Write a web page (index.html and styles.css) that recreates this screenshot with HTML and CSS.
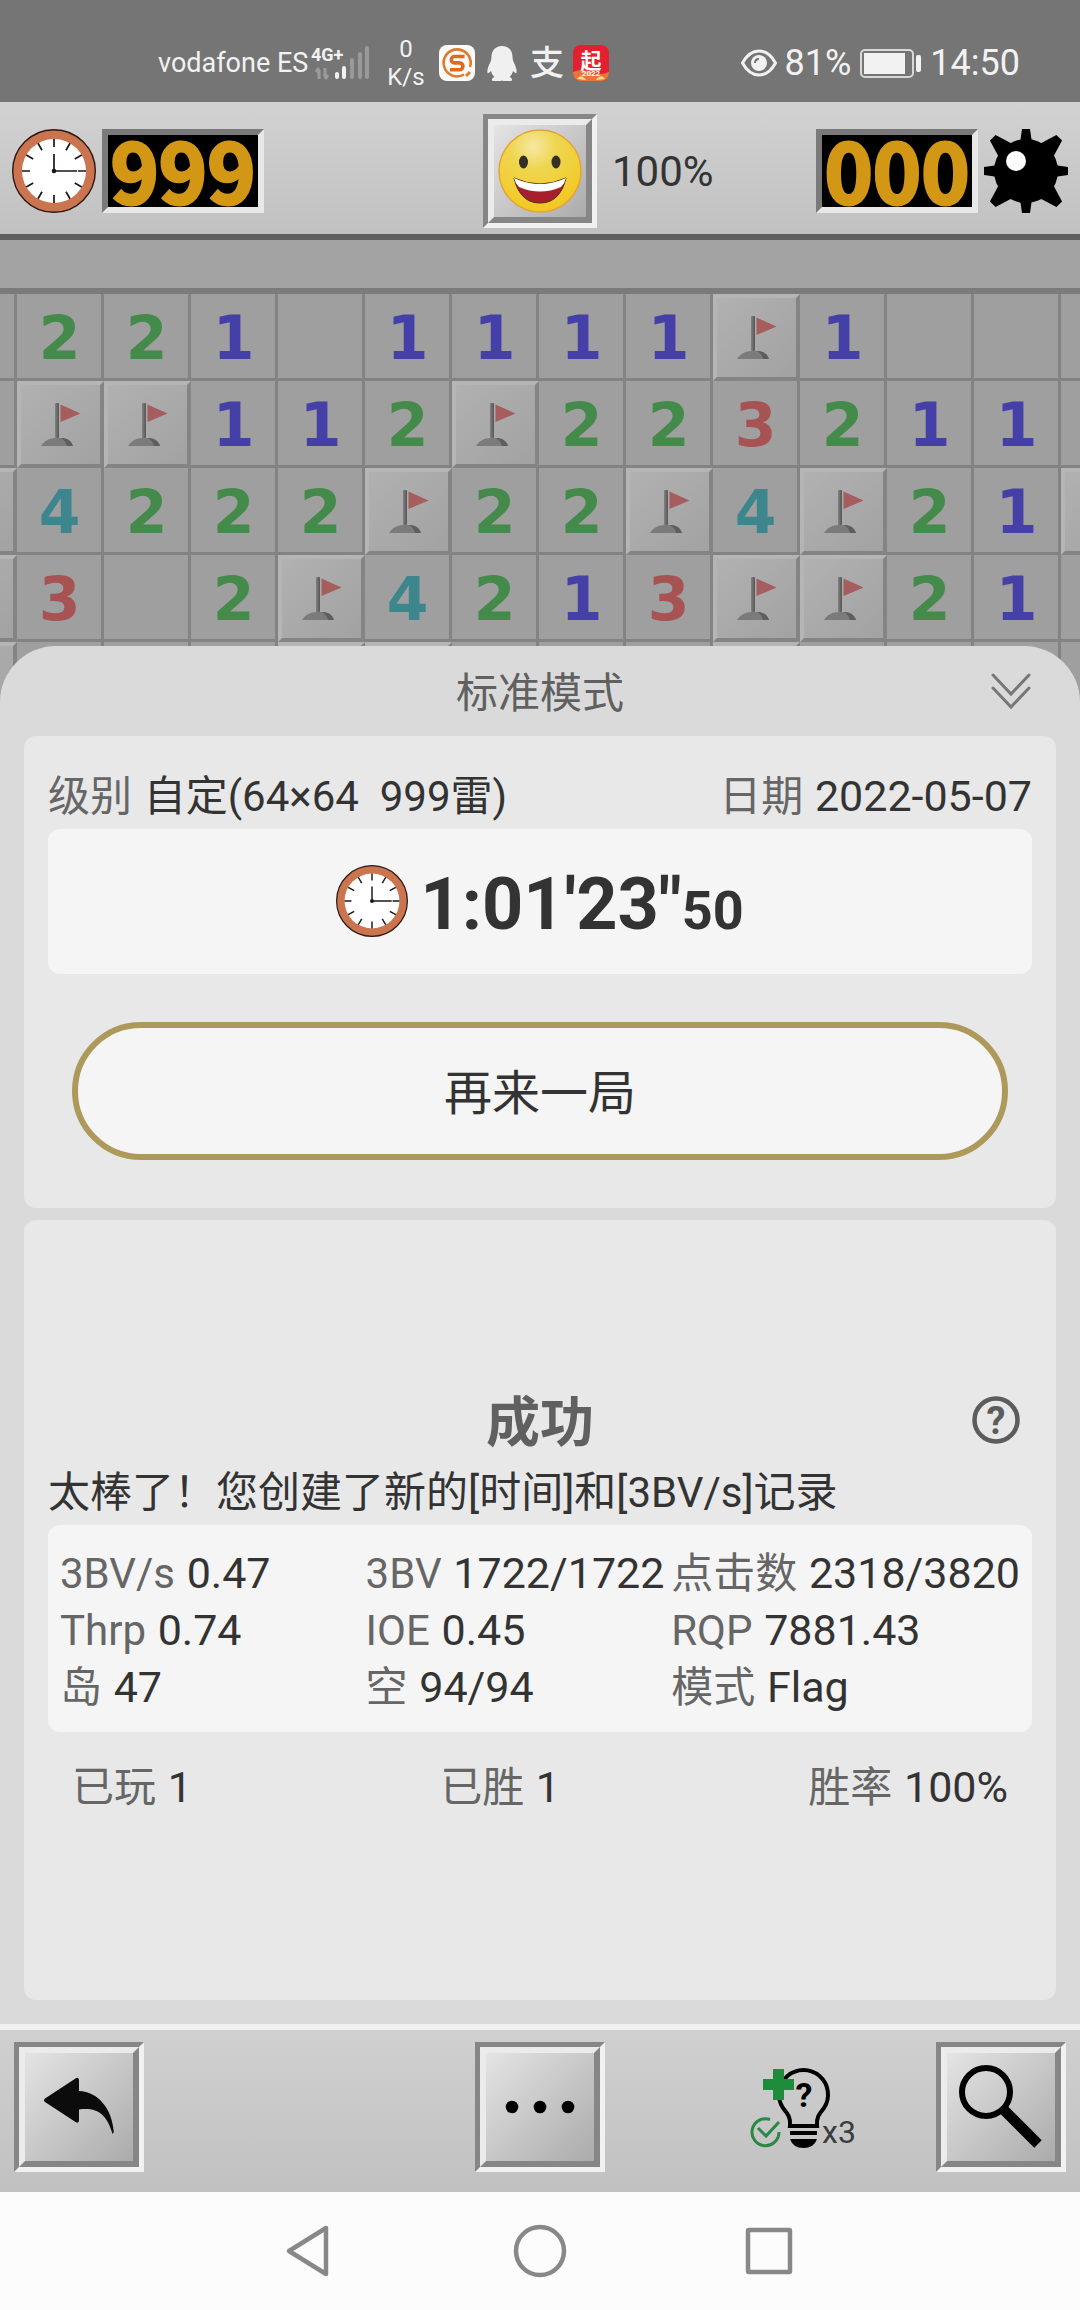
FILE: index.html
```html
<!DOCTYPE html>
<html lang="zh-CN">
<head>
    <meta charset="UTF-8">
    <meta name="viewport" content="width=device-width, initial-scale=1.0">
    <title>扫雷 - 标准模式</title>
    <link rel="stylesheet" href="styles.css">
</head>
<body>
    <!-- shared icons -->
    <svg class="sprite" aria-hidden="true">
        <defs>
            <linearGradient id="pole" x1="0" x2="1" y1="0" y2="0">
                <stop offset="0" stop-color="#818181"/>
                <stop offset="1" stop-color="#565656"/>
            </linearGradient>
        </defs>
        <symbol id="clock" viewBox="0 0 84 84">
            <circle cx="42" cy="42" r="41.3" fill="#cb7450" stroke="#2b1710" stroke-width="1.4"/>
            <circle cx="42" cy="42" r="32" fill="#fff"/>
            <g stroke="#1d1614" stroke-width="1.7">
                <path d="M42 10v8M42 66v8M10 42h8M66 42h8"/>
                <path d="M42 10v8M42 66v8M10 42h8M66 42h8" transform="rotate(30 42 42)"/>
                <path d="M42 10v8M42 66v8M10 42h8M66 42h8" transform="rotate(60 42 42)"/>
                <path d="M42 25v17h23" fill="none"/>
            </g>
            <circle cx="42" cy="42" r="2.3" fill="#1d1614"/>
        </symbol>
        <symbol id="flag" viewBox="0 0 40 43">
            <path d="M19.5 1.5v17.5l20-8.5z" fill="#a65d5d"/>
            <rect x="14" y="0" width="4" height="35" rx="1" fill="url(#pole)"/>
            <path d="M0 43c3-5 8-8 15-8h7c6 1 9 4 10 8z" fill="#7b7b7b"/>
            <path d="M20 35c5 0 10 2 12 8h-6c-1-4-3-6-6-8z" fill="#5e5e5e"/>
        </symbol>
    </svg>

    <div class="screen">
        <header class="status-bar">
            <div class="status-left">
                <span>vodafone ES</span>
                <svg class="signal" viewBox="0 0 60 36" width="60" height="36" role="img" aria-label="4G+">
                    <text x="0" y="16" class="signal-text">4G+</text>
                    <path d="M8 34V25m0-2-3 4M14 23v9m0 2 3-4" stroke="#9b9b9b" stroke-width="3" fill="none"/>
                    <g stroke-width="4" stroke-linecap="round">
                        <path d="M26 29v3M33 23v9" stroke="#f2f2f2"/>
                        <path d="M41 15v17M49 9v23M56 3v29" stroke="#999"/>
                    </g>
                </svg>
                <span class="speed">0<br>K/s</span>
                <svg class="app-icon" viewBox="0 0 36 36" width="36" height="36">
                    <rect width="36" height="36" rx="8" fill="#fdfbf9"/>
                    <path d="M25 29.500A13.500 13.500 0 1 1 31 22" fill="none" stroke="#e17a2a" stroke-width="2.6"/>
                    <path d="M27 31l4-4" stroke="#e17a2a" stroke-width="3"/>
                    <path d="M25.500 11.500H15.500a3.200 3.200 0 0 0 0 6.400h5a3.400 3.400 0 0 1 0 6.800H11" fill="none" stroke="#e06a1c" stroke-width="3.600"/>
                </svg>
                <svg class="app-icon" viewBox="0 0 30 36" width="30" height="36">
                    <path d="M15 1C8 1 4.500 6 4.500 12c0 2-.5 4-1.500 6-2 4-3 7-2.500 10 .5 1 2-.5 3.500-2 .5 2.500 2 4.500 3.500 6-3 1-3.500 4-1 4h7l1.500-.5 1.500.5h7c2.500 0 2-3-1-4 1.500-1.500 3-3.500 3.500-6 1.500 1.500 3 3 3.500 2 .5-3-.5-6-2.500-10-1-2-1.500-4-1.500-6C25.500 6 22 1 15 1z" fill="#f0f0f0"/>
                </svg>
                <svg class="app-icon" viewBox="0 0 32 36" width="32" height="36">
                    <text x="18" y="30" class="pay-text">支</text>
                </svg>
                <svg class="app-icon" viewBox="0 0 36 36" width="36" height="36">
                    <rect width="36" height="36" rx="8" fill="#e3202f"/>
                    <path d="M0 27q9-4 18 0t18 0v1a8 8 0 0 1-8 8H8a8 8 0 0 1-8-8z" fill="#e9743f"/>
                    <path d="M4 34q4-6 9 1zM23 35q5-7 9-1z" fill="#f9dc8f"/>
                    <text x="18" y="23" class="qi-text">起</text>
                    <text x="18" y="31" class="qi-year">2022</text>
                </svg>
            </div>
            <div class="status-right">
                <svg viewBox="0 0 36 28" width="36" height="28">
                    <path d="M1.500 14Q8 2 18 2t16.500 12Q28 26 18 26T1.500 14z" fill="none" stroke="#f2f2f2" stroke-width="3"/>
                    <circle cx="18" cy="14" r="8" fill="#f2f2f2"/>
                    <path d="M14 14q0-4 4-4" fill="none" stroke="#757575" stroke-width="2"/>
                </svg>
                <span>81%</span>
                <svg class="battery" viewBox="0 0 61 29" width="61" height="29">
                    <rect x="1" y="1" width="52" height="27" rx="4" fill="none" stroke="#d8d8d8" stroke-width="2"/>
                    <rect x="4" y="4" width="41" height="21" fill="#f2f2f2"/>
                    <rect x="56" y="6" width="5" height="17" rx="2" fill="#f2f2f2"/>
                </svg>
                <span>14:50</span>
            </div>
        </header>

        <div class="game-bar">
            <div class="counter-group">
                <svg class="icon"><use href="#clock"/></svg>
                <output class="counter">999</output>
            </div>
            <button class="tool-button" type="button" aria-label="重新开始">
                <span class="tool-face face-tight">
                    <svg class="icon" viewBox="0 0 84 84">
                        <defs>
                            <radialGradient id="skin" cx=".42" cy=".2" r=".8">
                                <stop offset="0" stop-color="#f6e7a4"/>
                                <stop offset=".35" stop-color="#efd650"/>
                                <stop offset="1" stop-color="#f2c81f"/>
                            </radialGradient>
                        </defs>
                        <circle cx="42" cy="42" r="41" fill="url(#skin)" stroke="#e5a23a" stroke-width="1.500"/>
                        <ellipse cx="25.500" cy="33" rx="4.500" ry="6.500" fill="#333027"/>
                        <ellipse cx="58" cy="33" rx="4.500" ry="6.500" fill="#333027"/>
                        <path d="M16 49q26 12 52 0-6 25-26 25T16 49z" fill="#a81f2c" stroke="#4b2317" stroke-width="1"/>
                        <path d="M16 49q26 12 52 0-1 5-5 9-21 9-42 0-4-4-5-9z" fill="#fff"/>
                    </svg>
                </span>
            </button>
            <div class="game-bar-right">
                <span class="progress">100%</span>
                <div class="counter-group">
                    <output class="counter">000</output>
                    <svg class="icon" viewBox="0 0 84 84">
                        <circle cx="42" cy="42" r="32"/>
                        <path d="M38 0h8l2 14H36zM38 84h8l2-14H36zM0 38v8l14 2V36zM84 38v8l-14 2V36z"/>
                        <path d="M38-5h8l6 20H32zM38 89h8l6-20H32zM-5 38v8l20 6V32zM89 38v8l-20 6V32z" transform="rotate(45 42 42)"/>
                        <circle cx="32" cy="32" r="10" fill="#fff"/>
                    </svg>
                </div>
            </div>
        </div>

        <div class="board">
            <div class="cells">
                <i class="cell"></i><i class="cell n2">2</i><i class="cell n2">2</i><i class="cell n1">1</i><i class="cell"></i><i class="cell n1">1</i><i class="cell n1">1</i>
                <i class="cell n1">1</i><i class="cell n1">1</i><i class="cell covered"><svg class="flag"><use href="#flag"/></svg></i><i class="cell n1">1</i><i class="cell"></i><i class="cell"></i><i class="cell"></i>

                <i class="cell"></i><i class="cell covered"><svg class="flag"><use href="#flag"/></svg></i><i class="cell covered"><svg class="flag"><use href="#flag"/></svg></i><i class="cell n1">1</i><i class="cell n1">1</i><i class="cell n2">2</i><i class="cell covered"><svg class="flag"><use href="#flag"/></svg></i>
                <i class="cell n2">2</i><i class="cell n2">2</i><i class="cell n3">3</i><i class="cell n2">2</i><i class="cell n1">1</i><i class="cell n1">1</i><i class="cell"></i>

                <i class="cell covered"></i><i class="cell n4">4</i><i class="cell n2">2</i><i class="cell n2">2</i><i class="cell n2">2</i><i class="cell covered"><svg class="flag"><use href="#flag"/></svg></i><i class="cell n2">2</i>
                <i class="cell n2">2</i><i class="cell covered"><svg class="flag"><use href="#flag"/></svg></i><i class="cell n4">4</i><i class="cell covered"><svg class="flag"><use href="#flag"/></svg></i><i class="cell n2">2</i><i class="cell n1">1</i><i class="cell covered"></i>

                <i class="cell covered"></i><i class="cell n3">3</i><i class="cell"></i><i class="cell n2">2</i><i class="cell covered"><svg class="flag"><use href="#flag"/></svg></i><i class="cell n4">4</i><i class="cell n2">2</i>
                <i class="cell n1">1</i><i class="cell n3">3</i><i class="cell covered"><svg class="flag"><use href="#flag"/></svg></i><i class="cell covered"><svg class="flag"><use href="#flag"/></svg></i><i class="cell n2">2</i><i class="cell n1">1</i><i class="cell"></i>

                <i class="cell covered"></i><i class="cell"></i><i class="cell"></i><i class="cell"></i><i class="cell covered"></i><i class="cell covered"></i><i class="cell"></i>
                <i class="cell"></i><i class="cell"></i><i class="cell covered"></i><i class="cell"></i><i class="cell"></i><i class="cell"></i><i class="cell"></i>
            </div>
        </div>

        <main class="sheet">
            <div class="sheet-header">
                <h1>标准模式</h1>
                <button class="plain-button" type="button" aria-label="收起">
                    <svg viewBox="0 0 40 36" width="40" height="36" fill="none" stroke="#777" stroke-width="3" stroke-linecap="round">
                        <path d="M2 2l18 19L38 2M2 15l18 19 18-19"/>
                    </svg>
                </button>
            </div>

            <section class="card">
                <div class="row">
                    <span><span class="label">级别</span> <span class="level">自定(64×64  999雷)</span></span>
                    <span><span class="label">日期</span> 2022-05-07</span>
                </div>
                <div class="time-box">
                    <svg class="time-icon"><use href="#clock"/></svg>
                    <span class="time">1:01'23"<small>50</small></span>
                </div>
                <button class="again" type="button">再来一局</button>
            </section>

            <section class="card result">
                <div class="result-header">
                    <h2>成功</h2>
                    <button class="plain-button" type="button" aria-label="帮助">
                        <svg viewBox="0 0 48 48" width="48" height="48">
                            <circle cx="24" cy="24" r="21.500" fill="none" stroke="#5c5c5c" stroke-width="4.500"/>
                            <text x="24" y="38" class="help-mark">?</text>
                        </svg>
                    </button>
                </div>
                <p class="message">太棒了！您创建了新的[时间]和[3BV/s]记录</p>
                <div class="stats">
                    <span><span class="label">3BV/s</span> 0.47</span>
                    <span><span class="label">3BV</span> 1722/1722</span>
                    <span><span class="label">点击数</span> 2318/3820</span>
                    <span><span class="label">Thrp</span> 0.74</span>
                    <span><span class="label">IOE</span> 0.45</span>
                    <span><span class="label">RQP</span> 7881.43</span>
                    <span><span class="label">岛</span> 47</span>
                    <span><span class="label">空</span> 94/94</span>
                    <span><span class="label">模式</span> Flag</span>
                </div>
                <div class="totals">
                    <span><span class="label">已玩</span> 1</span>
                    <span><span class="label">已胜</span> 1</span>
                    <span><span class="label">胜率</span> 100%</span>
                </div>
            </section>
        </main>

        <div class="bottom-bar">
            <div>
                <button class="tool-button" type="button" aria-label="返回">
                    <span class="tool-face">
                        <svg class="icon" viewBox="0 0 84 84" fill="#0c0c0c">
                            <path d="M8 33.500 38.500 13.500q3.500-2 3.500 2V26c19 1 33 17 34.800 41l-1.300 2C70 49 60 42 42 44.500V55q0 4-3.500 2L8 37q-2-1.700 0-3.500z"/>
                        </svg>
                    </span>
                </button>
            </div>
            <button class="tool-button" type="button" aria-label="更多">
                <span class="tool-face">
                    <svg class="icon" viewBox="0 0 84 84">
                        <circle cx="14" cy="42" r="6.300"/>
                        <circle cx="42" cy="42" r="6.300"/>
                        <circle cx="70" cy="42" r="6.300"/>
                    </svg>
                </span>
            </button>
            <div class="bottom-right">
                <button class="plain-button" type="button" aria-label="提示">
                    <svg class="hint" viewBox="0 0 106 84" width="106" height="84">
                        <path d="M40 61c1-9-3-13-7-18A24.500 24.500 0 1 1 74 43c-4 5-8 9-7 18z" fill="none" stroke="#000" stroke-width="4"/>
                        <path d="M40 66h27v4H40zM40 74h27q-3 9-13.500 9T40 74z"/>
                        <text x="54" y="42" class="hint-mark">?</text>
                        <path d="M23 4h11v10h10v11H34v10H23V25H13V14h10z" fill="#1f8c3b"/>
                        <path d="M20 54.500A13.500 13.500 0 1 0 29 67M8 63l8 8 13-14" fill="none" stroke="#2a8744" stroke-width="3"/>
                        <text x="72" y="78" class="hint-count">x3</text>
                    </svg>
                </button>
                <button class="tool-button" type="button" aria-label="缩放">
                    <span class="tool-face">
                        <svg class="icon" viewBox="0 0 84 84" fill="none" stroke="#000">
                            <circle cx="27" cy="27" r="24" stroke-width="6"/>
                            <path d="M45 45l34 34" stroke-width="10.500"/>
                        </svg>
                    </span>
                </button>
            </div>
        </div>

        <nav class="nav-bar">
            <button class="plain-button" type="button" aria-label="后退">
                <svg viewBox="0 0 60 60" width="60" height="60"><path d="M9 30 46 7v46z"/></svg>
            </button>
            <button class="plain-button" type="button" aria-label="主屏幕">
                <svg viewBox="0 0 60 60" width="60" height="60"><circle cx="30" cy="30" r="24"/></svg>
            </button>
            <button class="plain-button" type="button" aria-label="最近任务">
                <svg viewBox="0 0 60 60" width="60" height="60"><rect x="8" y="9" width="42" height="42" rx="1"/></svg>
            </button>
        </nav>
    </div>
</body>
</html>
```
FILE: styles.css
```css
* {
    box-sizing: border-box;
}
body {
    margin: 0;
    font-family: Roboto, "Noto Sans CJK SC", sans-serif;
    font-size: 42px;
    color: #333;
    background: #fcfcfc;
}
h1, h2, p {
    margin: 0;
}
button {
    margin: 0;
    padding: 0;
    font: inherit;
    color: inherit;
    cursor: pointer;
}
svg {
    display: block;
    flex: none;
}
.sprite {
    position: absolute;
    width: 0;
    height: 0;
}
.screen {
    display: flex;
    flex-direction: column;
    min-height: 100vh;
}
.icon {
    width: 84px;
    height: 84px;
    overflow: visible;
}
.plain-button {
    border: 0;
    background: none;
}

/* status bar */
.status-bar {
    display: flex;
    justify-content: space-between;
    align-items: center;
    height: 102px;
    padding: 24px 60px 0 158px;
    background: #757575;
    color: #f2f2f2;
}
.status-left, .status-right {
    display: flex;
    align-items: center;
}
.status-left {
    font-size: 27px;
}
.status-right {
    gap: 8px;
    font-size: 36px;
}
.signal {
    margin-left: 3px;
}
.signal-text {
    font-size: 18px;
    font-weight: bold;
    fill: #f2f2f2;
}
.speed {
    margin: 0 2px 0 16px;
    font-size: 24px;
    line-height: 28px;
    text-align: center;
}
.app-icon {
    margin-left: 12px;
    overflow: visible;
}
.pay-text {
    font-size: 34px;
    font-weight: 500;
    text-anchor: middle;
    fill: #f2f2f2;
}
.qi-text {
    font-size: 21px;
    font-weight: bold;
    text-anchor: middle;
    fill: #fff;
}
.qi-year {
    font-size: 8px;
    font-weight: bold;
    text-anchor: middle;
    fill: #fff;
}
.battery {
    margin: 0 1px;
}

/* game toolbar */
.game-bar {
    display: grid;
    grid-template-columns: 1fr auto 1fr;
    align-items: center;
    padding: 12px 12px 6px;
    border-bottom: 6px solid #606060;
    background: linear-gradient(#d2d2d2, #c1c1c1);
}
.counter-group {
    display: flex;
    gap: 6px;
}
.counter {
    width: 162px;
    height: 84px;
    border: 6px solid;
    border-color: #7a7a7a #e8e8e8 #e8e8e8 #7a7a7a;
    background: #000;
    color: #d39716;
    font-family: "Noto Sans CJK SC", sans-serif;
    font-size: 82px;
    font-weight: bold;
    line-height: 68px;
    text-align: center;
    -webkit-text-stroke: 3px #d39716;
}
.game-bar-right {
    display: flex;
    justify-content: space-between;
    align-items: center;
    padding-left: 15px;
}
.tool-button {
    display: block;
    border: 5px solid;
    border-color: #868686 #f1f1f1 #f1f1f1 #868686;
    background: #868686;
}
.tool-face {
    display: block;
    padding: 12px;
    border: 6px solid;
    border-color: #ebebeb #868686 #868686 #ebebeb;
    background: linear-gradient(135deg, #e4e4e4, #ababab);
}
.face-tight {
    padding: 4px;
}

/* board */
.board {
    overflow: hidden;
    padding-top: 48px;
    background: #a3a3a3;
}
.cells {
    display: grid;
    grid-template-columns: repeat(14, 87px);
    grid-auto-rows: 87px;
    justify-content: center;
    padding-right: 2px;
    border-top: 6px solid #7b7b7b;
}
.cell {
    display: flex;
    justify-content: center;
    align-items: center;
    padding-top: 4px;
    padding-left: 1px;
    border-right: 3px solid #838383;
    border-bottom: 3px solid #838383;
    background: #9f9f9f;
    font-family: "DejaVu Sans", sans-serif;
    font-size: 60px;
    font-style: normal;
    font-weight: bold;
    line-height: 80px;
}
.covered {
    padding: 0;
    border: 4px solid;
    border-color: #b5b5b5 #848484 #848484 #b5b5b5;
    background: linear-gradient(135deg, #b1b1b1, #a2a2a2);
}
.flag {
    width: 40px;
    height: 43px;
}
.n1 { color: #4540a8; }
.n2 { color: #448a4a; }
.n3 { color: #a75353; }
.n4 { color: #3d868d; }

/* result sheet */
.sheet {
    position: relative;
    display: flex;
    flex: 1;
    flex-direction: column;
    gap: 12px;
    margin-top: -83px;
    padding: 0 24px 24px;
    border-radius: 56px 56px 0 0;
    background: #dadada;
}
.sheet-header, .result-header {
    display: grid;
    grid-template-columns: 1fr auto 1fr;
    align-items: center;
}
.sheet-header {
    height: 90px;
    margin-bottom: -12px;
    padding: 0 25px;
}
.sheet-header h1 {
    grid-column: 2;
    padding-bottom: 4px;
    font-size: 42px;
    font-weight: normal;
    color: #606060;
}
.sheet-header .plain-button, .result-header .plain-button {
    justify-self: end;
}
.card {
    padding: 29px 24px 48px;
    border-radius: 12px;
    background: #e8e8e8;
}
.label {
    margin-right: 1px;
    font-size: 42px;
    color: #666;
}
.row, .stats, .totals {
    font-size: 43px;
}
.row {
    display: flex;
    justify-content: space-between;
    padding-bottom: 1px;
    line-height: 63px;
}
.level {
    font-size: 42px;
    white-space: pre;
}
.time-box {
    display: flex;
    justify-content: center;
    align-items: center;
    gap: 12px;
    height: 145px;
    padding-bottom: 2px;
    border-radius: 12px;
    background: #f5f5f5;
}
.time-icon {
    width: 72px;
    height: 72px;
}
.time {
    padding-top: 8px;
    font-size: 72px;
    font-weight: bold;
}
.time small {
    font-size: 54px;
}
.again {
    display: block;
    width: calc(100% - 48px);
    height: 138px;
    margin: 48px auto 0;
    padding-bottom: 5px;
    border: 6px solid #ad9a5b;
    border-radius: 69px;
    background: #f5f5f5;
    font-size: 48px;
}
.result {
    display: flex;
    flex: 1;
    flex-direction: column;
    justify-content: center;
    padding: 24px;
}
.result-header {
    height: 72px;
    padding: 0 12px 4px;
}
.result-header h2 {
    grid-column: 2;
    padding-top: 8px;
    font-size: 54px;
    line-height: 60px;
    color: #606060;
}
.help-mark {
    font-size: 38px;
    font-weight: bold;
    text-anchor: middle;
    fill: #5c5c5c;
}
.message {
    padding-top: 2px;
    line-height: 65px;
}
.stats {
    display: grid;
    grid-template-columns: 1fr 1fr auto;
    padding: 20px 12px 16px;
    border-radius: 12px;
    background: #f5f5f5;
    line-height: 57px;
    white-space: nowrap;
}
.totals {
    display: flex;
    justify-content: space-between;
    padding: 25px 24px 17px;
    line-height: 60px;
}

/* bottom toolbar */
.bottom-bar {
    display: grid;
    grid-template-columns: 1fr auto 1fr;
    padding: 12px 14px 20px;
    border-top: 6px solid #f0f0f0;
    background: linear-gradient(#d0d0d0, #c1c1c1);
}
.bottom-right {
    display: flex;
    justify-content: flex-end;
    align-items: center;
    gap: 80px;
}
.hint {
    overflow: visible;
}
.hint-mark {
    font-size: 34px;
    font-weight: bold;
    text-anchor: middle;
}
.hint-count {
    font-size: 32px;
    fill: #3c3c3c;
}

/* system navigation */
.nav-bar {
    display: flex;
    justify-content: center;
    align-items: center;
    gap: 170px;
    height: 118px;
    background: #fcfcfc;
}
.nav-bar svg {
    fill: none;
    stroke: #888;
    stroke-width: 4.5px;
    stroke-linejoin: round;
}
```
